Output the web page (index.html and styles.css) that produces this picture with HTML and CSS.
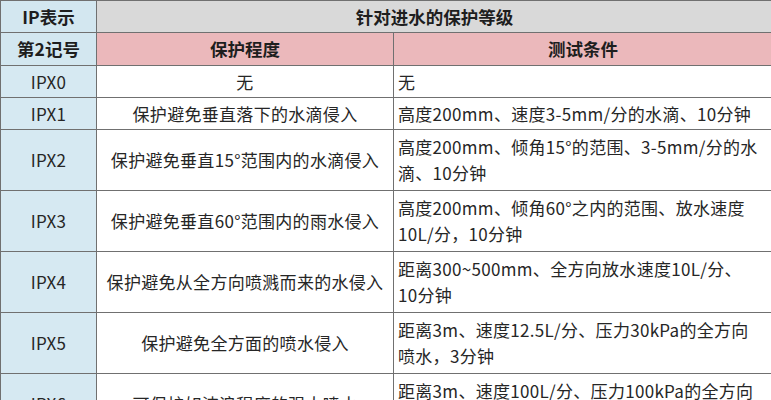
FILE: index.html
```html
<!DOCTYPE html>
<html lang="zh">
<head>
<meta charset="utf-8">
<link rel="stylesheet" href="styles.css">
</head>
<body>
<table class="ip">
  <colgroup>
    <col class="c1"><col class="c2"><col class="c3">
  </colgroup>
  <tr class="top">
    <th class="blue">IP表示</th>
    <th class="grey" colspan="2">针对进水的保护等级</th>
  </tr>
  <tr class="sub">
    <th class="blue">第2记号</th>
    <th class="pink">保护程度</th>
    <th class="pink">测试条件</th>
  </tr>
  <tr class="one">
    <td class="code">IPX0</td><td class="deg">无</td><td class="cond">无</td>
  </tr>
  <tr class="one">
    <td class="code">IPX1</td><td class="deg">保护避免垂直落下的水滴侵入</td><td class="cond">高度200mm、速度3-5mm/分的水滴、10分钟</td>
  </tr>
  <tr class="two">
    <td class="code">IPX2</td><td class="deg">保护避免垂直15°范围内的水滴侵入</td><td class="cond">高度200mm、倾角15°的范围、3-5mm/分的水<br>滴、10分钟</td>
  </tr>
  <tr class="two">
    <td class="code">IPX3</td><td class="deg">保护避免垂直60°范围内的雨水侵入</td><td class="cond">高度200mm、倾角60°之内的范围、放水速度<br>10L/分，10分钟</td>
  </tr>
  <tr class="two">
    <td class="code">IPX4</td><td class="deg">保护避免从全方向喷溅而来的水侵入</td><td class="cond">距离300~500mm、全方向放水速度10L/分、<br>10分钟</td>
  </tr>
  <tr class="two">
    <td class="code">IPX5</td><td class="deg">保护避免全方面的喷水侵入</td><td class="cond">距离3m、速度12.5L/分、压力30kPa的全方向<br>喷水，3分钟</td>
  </tr>
  <tr class="two">
    <td class="code">IPX6</td><td class="deg">可保护如波浪程度的强大喷水</td><td class="cond">距离3m、速度100L/分、压力100kPa的全方向<br>喷水，3分钟</td>
  </tr>
</table>
</body>
</html>
```

FILE: styles.css
```css
html, body {
  margin: 0;
  padding: 0;
  background: #ffffff;
}
body {
  font-family: "Noto Sans CJK SC", "Noto Sans", sans-serif;
  font-size: 17px;
  color: #262626;
}
.ip {
  border-collapse: collapse;
  width: 772px;
  table-layout: fixed;
}
.c1 { width: 96px; }
.c2 { width: 297px; }
.c3 { width: 379px; }
.ip th, .ip td {
  border: 1px solid #707070;
  padding: 0 4px;
  line-height: 26px;
  vertical-align: middle;
  white-space: nowrap;
}
.ip td { letter-spacing: 0.3px; }
.ip th {
  font-weight: bold;
  font-size: 17.5px;
  color: #1e1e1e;
  text-align: center;
}
.top { height: 32px; }
.sub { height: 33px; }
.one { height: 32px; }
.two { height: 61px; }
.blue { background: #d3e7f0; }
.grey { background: #d9d9d9; }
.pink { background: #ebb8bb; }
.code {
  background: #d6e9f2;
  text-align: center;
}
.deg { text-align: center; }
.cond { text-align: left; }
```
